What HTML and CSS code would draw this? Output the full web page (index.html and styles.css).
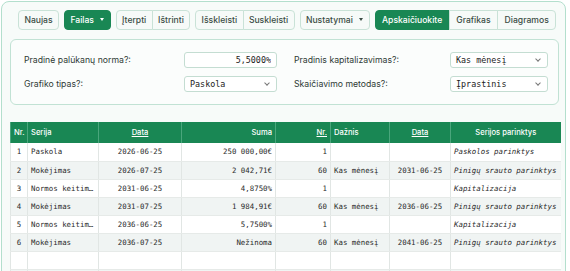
FILE: index.html
```html
<!DOCTYPE html>
<html lang="lt">
<head>
    <meta charset="UTF-8">
    <title>Skaičiuoklė</title>
    <link rel="stylesheet" href="styles.css">
</head>
<body>
    <div class="app">
        <div class="toolbar">
            <button class="btn">Naujas</button>
            <button class="btn btn-green">Failas <span class="caret"></span></button>
            <div class="group">
                <button class="btn">Įterpti</button>
                <button class="btn">Ištrinti</button>
            </div>
            <div class="group">
                <button class="btn">Išskleisti</button>
                <button class="btn">Suskleisti</button>
            </div>
            <button class="btn">Nustatymai <span class="caret"></span></button>
            <div class="group">
                <button class="btn btn-green wide">Apskaičiuokite</button>
                <button class="btn wide">Grafikas</button>
                <button class="btn wide">Diagramos</button>
            </div>
        </div>

        <div class="params">
            <div class="param">
                <label>Pradinė palūkanų norma?:</label>
                <input class="field num" type="text" value="5,5000%">
            </div>
            <div class="param">
                <label>Pradinis kapitalizavimas?:</label>
                <div class="field select">Kas mėnesį</div>
            </div>
            <div class="param">
                <label>Grafiko tipas?:</label>
                <div class="field select">Paskola</div>
            </div>
            <div class="param">
                <label>Skaičiavimo metodas?:</label>
                <div class="field select">Įprastinis</div>
            </div>
        </div>

        <table class="grid">
            <colgroup>
                <col style="width:17px">
                <col style="width:71px">
                <col style="width:83px">
                <col style="width:94px">
                <col style="width:55px">
                <col style="width:59px">
                <col style="width:61px">
                <col style="width:110px">
            </colgroup>
            <thead>
                <tr>
                    <th class="l">Nr.</th>
                    <th class="l">Serija</th>
                    <th><a>Data</a></th>
                    <th class="r">Suma</th>
                    <th class="r"><a>Nr.</a></th>
                    <th class="l">Dažnis</th>
                    <th><a>Data</a></th>
                    <th>Serijos parinktys</th>
                </tr>
            </thead>
            <tbody>
                <tr>
                    <td class="c">1</td><td>Paskola</td><td class="c">2026-06-25</td><td class="r">250 000,00€</td>
                    <td class="r">1</td><td></td><td></td><td class="i">Paskolos parinktys</td>
                </tr>
                <tr>
                    <td class="c">2</td><td>Mokėjimas</td><td class="c">2026-07-25</td><td class="r">2 042,71€</td>
                    <td class="r">60</td><td>Kas mėnesį</td><td class="c">2031-06-25</td><td class="i">Pinigų srauto parinktys</td>
                </tr>
                <tr>
                    <td class="c">3</td><td>Normos keitim…</td><td class="c">2031-06-25</td><td class="r">4,8750%</td>
                    <td class="r">1</td><td></td><td></td><td class="i">Kapitalizacija</td>
                </tr>
                <tr>
                    <td class="c">4</td><td>Mokėjimas</td><td class="c">2031-07-25</td><td class="r">1 984,91€</td>
                    <td class="r">60</td><td>Kas mėnesį</td><td class="c">2036-06-25</td><td class="i">Pinigų srauto parinktys</td>
                </tr>
                <tr>
                    <td class="c">5</td><td>Normos keitim…</td><td class="c">2036-06-25</td><td class="r">5,7500%</td>
                    <td class="r">1</td><td></td><td></td><td class="i">Kapitalizacija</td>
                </tr>
                <tr>
                    <td class="c">6</td><td>Mokėjimas</td><td class="c">2036-07-25</td><td class="r">Nežinoma</td>
                    <td class="r">60</td><td>Kas mėnesį</td><td class="c">2041-06-25</td><td class="i">Pinigų srauto parinktys</td>
                </tr>
                <tr>
                    <td></td><td></td><td></td><td></td><td></td><td></td><td></td><td></td>
                </tr>
                <tr>
                    <td></td><td></td><td></td><td></td><td></td><td></td><td></td><td></td>
                </tr>
            </tbody>
        </table>
    </div>
</body>
</html>
```

FILE: styles.css
```css
* {
    box-sizing: border-box;
}

body {
    margin: 0;
    background: #ffffff;
    font-family: Inter, "Noto Sans", sans-serif;
    color: #212529;
    overflow: hidden;
}

.app {
    margin: 1px 4px 0 1px;
    height: 290px;
    border: 1px solid #b3dfcd;
    border-radius: 8px;
    background: #f7fbf9;
    padding: 8px 6px 0 8px;
}

.toolbar {
    display: flex;
    gap: 5px;
    padding-left: 8px;
}

.btn {
    height: 20px;
    padding: 0 5.4px;
    font-family: inherit;
    font-size: 8.6px;
    font-weight: 500;
    color: #3b4d45;
    background: #f6faf8;
    border: 1px solid #c9e2d7;
    border-radius: 4px;
    white-space: nowrap;
}

.btn.wide {
    padding: 0 6.5px;
}

.btn-green {
    background: #198754;
    border-color: #198754;
    color: #ffffff;
}

.caret {
    display: inline-block;
    margin-left: 4px;
    vertical-align: 2px;
    border-top: 3px solid currentColor;
    border-left: 2.5px solid transparent;
    border-right: 2.5px solid transparent;
}

.group {
    display: flex;
}

.group .btn {
    border-radius: 0;
    margin-left: -1px;
}

.group .btn:first-child {
    border-radius: 4px 0 0 4px;
    margin-left: 0;
}

.group .btn:last-child {
    border-radius: 0 4px 4px 0;
}

.params {
    margin-top: 9px;
    height: 66px;
    border: 1px solid #c1e2d4;
    border-radius: 6px;
    background: #fbfdfc;
    padding: 12px 12px 0 13px;
    display: grid;
    grid-template-columns: 253px 254px;
    column-gap: 17px;
    row-gap: 8px;
    align-content: start;
}

.param {
    display: flex;
    align-items: center;
    justify-content: space-between;
    height: 16px;
}

.param label {
    font-size: 8.7px;
    color: #2e3a35;
}

.field {
    width: 93px;
    height: 16px;
    border: 1px solid #c4ddd2;
    border-radius: 3px;
    background: #ffffff;
    font-family: "DejaVu Sans Mono", monospace;
    font-size: 8.4px;
    color: #222;
    padding: 0 5px;
    line-height: 14px;
}

.param:nth-child(even) .field {
    width: 98px;
}

.num {
    text-align: right;
}

.select {
    position: relative;
}

.select::after {
    content: "";
    position: absolute;
    right: 7px;
    top: 4px;
    width: 3px;
    height: 3px;
    border-right: 1px solid #777;
    border-bottom: 1px solid #777;
    transform: rotate(45deg);
}

.grid {
    margin-top: 17px;
    width: 550px;
    table-layout: fixed;
    border-collapse: collapse;
    background: #ffffff;
}

.grid th {
    height: 21px;
    background: #198754;
    color: #ffffff;
    font-size: 7.6px;
    font-weight: 500;
    text-align: center;
    padding: 0 3px;
    border-left: 1px solid #4aa67c;
}

.grid th a {
    text-decoration: underline;
}

.grid td {
    height: 18px;
    padding: 0 3px;
    font-family: "DejaVu Sans Mono", monospace;
    font-size: 7.4px;
    color: #2a2a2a;
    border-left: 1px solid #e1e6e4;
    border-bottom: 1px solid #e6eae8;
    white-space: nowrap;
    overflow: hidden;
    text-overflow: clip;
}

.grid tbody tr:nth-child(even) td {
    background: #f0f4f3;
}

.grid .l {
    text-align: left;
}

.grid .r {
    text-align: right;
}

.grid .c {
    text-align: center;
}

.grid .i {
    font-style: italic;
}
```
